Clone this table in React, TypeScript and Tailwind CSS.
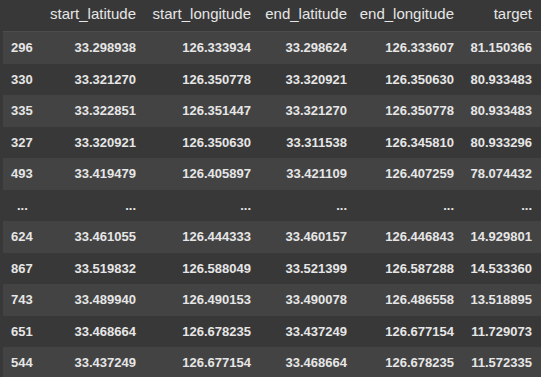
const columns = ["start_latitude", "start_longitude", "end_latitude", "end_longitude", "target"];

const rows: [string, string, string, string, string, string][] = [
  ["296", "33.298938", "126.333934", "33.298624", "126.333607", "81.150366"],
  ["330", "33.321270", "126.350778", "33.320921", "126.350630", "80.933483"],
  ["335", "33.322851", "126.351447", "33.321270", "126.350778", "80.933483"],
  ["327", "33.320921", "126.350630", "33.311538", "126.345810", "80.933296"],
  ["493", "33.419479", "126.405897", "33.421109", "126.407259", "78.074432"],
  ["...", "...", "...", "...", "...", "..."],
  ["624", "33.461055", "126.444333", "33.460157", "126.446843", "14.929801"],
  ["867", "33.519832", "126.588049", "33.521399", "126.587288", "14.533360"],
  ["743", "33.489940", "126.490153", "33.490078", "126.486558", "13.518895"],
  ["651", "33.468664", "126.678235", "33.437249", "126.677154", "11.729073"],
  ["544", "33.437249", "126.677154", "33.468664", "126.678235", "11.572335"],
];

const grid = "grid grid-cols-[60px_81px_115px_96px_107px_78px]";

export default function App() {
  return (
    <main className="min-h-[377px] w-[541px] overflow-hidden bg-[#383838] pl-[3px] font-['Liberation_Sans',Arial,sans-serif] text-[#e6e6e6]">
      {/* header */}
      <div className={`${grid} h-[32px] items-center border-b border-[#4c4c4c] text-[15px]`}>
        <div />
        {columns.map((c) => (
          <div key={c} className="flex justify-end whitespace-nowrap pr-[8px] pb-[2px]">
            <span>{c}</span>
          </div>
        ))}
      </div>

      {rows.map((r, i) => (
        <div
          key={i}
          className={[
            grid,
            "h-[31.5px] items-center text-[13px] font-bold",
            i % 2 === 0 ? "bg-[#434343]" : "bg-[#383838]",
          ].join(" ")}
        >
          <div className={r[0] === "..." ? "pl-[14px]" : "pl-[8px]"}>{r[0]}</div>
          {r.slice(1).map((v, j) => (
            <div key={j} className="flex justify-end whitespace-nowrap pr-[8px]">
              <span>{v}</span>
            </div>
          ))}
        </div>
      ))}
    </main>
  );
}
